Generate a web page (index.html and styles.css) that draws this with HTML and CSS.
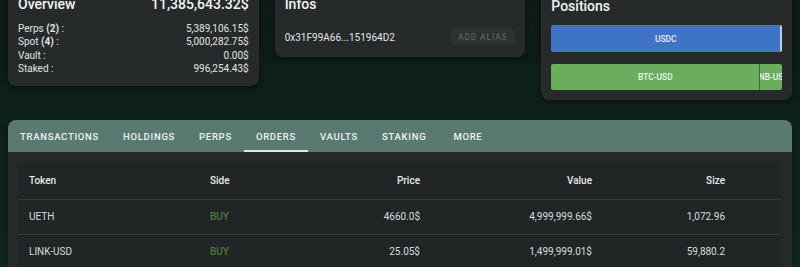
FILE: index.html
```html
<!DOCTYPE html>
<html lang="en">
<head>
<meta charset="utf-8">
<title>Account</title>
<link rel="stylesheet" href="styles.css">
</head>
<body>
<div class="page">
  <div class="cards">
    <section class="card overview">
      <div class="card-head">
        <h2 class="card-title">Overview</h2>
        <span class="total">11,385,643.32$</span>
      </div>
      <div class="stats">
        <div class="stat"><span>Perps <b>(2)</b> :</span><span>5,389,106.15$</span></div>
        <div class="stat"><span>Spot <b>(4)</b> :</span><span>5,000,282.75$</span></div>
        <div class="stat"><span>Vault :</span><span>0.00$</span></div>
        <div class="stat"><span>Staked :</span><span>996,254.43$</span></div>
      </div>
    </section>
    <section class="card infos">
      <h2 class="card-title">Infos</h2>
      <div class="addr-row">
        <span class="addr">0x31F99A66...151964D2</span>
        <button class="alias-btn" type="button">ADD ALIAS</button>
      </div>
    </section>
    <section class="card positions">
      <h2 class="card-title">Positions</h2>
      <div class="bar">
        <div class="seg seg-usdc" style="width:99.2%">USDC</div>
        <div class="seg seg-light" style="width:0.8%"></div>
      </div>
      <div class="bar">
        <div class="seg seg-green" style="width:90.2%">BTC-USD</div>
        <div class="seg seg-green seg-split" style="width:9.8%">BNB-USD</div>
      </div>
    </section>
  </div>

  <section class="panel">
    <nav class="tabs">
      <span class="tab">TRANSACTIONS</span>
      <span class="tab">HOLDINGS</span>
      <span class="tab">PERPS</span>
      <span class="tab active">ORDERS</span>
      <span class="tab">VAULTS</span>
      <span class="tab">STAKING</span>
      <span class="tab tab-more">MORE</span>
    </nav>
    <div class="panel-body">
      <div class="table-card">
        <table class="orders">
          <colgroup>
            <col class="c-token">
            <col class="c-side">
            <col class="c-price">
            <col class="c-value">
            <col class="c-size">
            <col class="c-rest">
          </colgroup>
          <thead>
            <tr>
              <th class="l">Token</th>
              <th class="l">Side</th>
              <th class="r">Price</th>
              <th class="r">Value</th>
              <th class="r">Size</th>
              <th></th>
            </tr>
          </thead>
          <tbody>
            <tr>
              <td class="l">UETH</td>
              <td class="l buy">BUY</td>
              <td class="r">4660.0$</td>
              <td class="r">4,999,999.66$</td>
              <td class="r">1,072.96</td>
              <td></td>
            </tr>
            <tr>
              <td class="l">LINK-USD</td>
              <td class="l buy">BUY</td>
              <td class="r">25.05$</td>
              <td class="r">1,499,999.01$</td>
              <td class="r">59,880.2</td>
              <td></td>
            </tr>
          </tbody>
        </table>
      </div>
    </div>
  </section>
</div>
</body>
</html>
```

FILE: styles.css
```css
* { box-sizing: border-box; }

html, body {
  height: 100%;
}

body {
  margin: 0;
  padding: 0 8px;
  background: linear-gradient(180deg, #0d1b18 0%, #0f221d 60%, #10271f 100%);
  font-family: Roboto, "Noto Sans", "Liberation Sans", sans-serif;
  color: #e4e7e6;
  overflow: hidden;
}

.page {
  margin-top: -14px;
}

.cards {
  display: grid;
  grid-template-columns: repeat(3, 1fr);
  column-gap: 16px;
  align-items: start;
}

.card {
  background: #272a2a;
  border-radius: 8px;
  padding: 10px;
  box-shadow: 0 2px 6px rgba(0, 0, 0, 0.45);
}

.card-title {
  margin: 0;
  font-size: 14px;
  line-height: 17px;
  font-weight: 500;
  color: #f2f3f3;
}

.card-head {
  display: flex;
  justify-content: space-between;
  align-items: baseline;
}

.total {
  font-size: 14px;
  line-height: 17px;
  font-weight: 500;
  color: #f2f3f3;
}

.stats {
  margin-top: 9px;
  font-size: 10px;
  line-height: 13.4px;
  color: #e2e5e4;
}

.stat {
  display: flex;
  justify-content: space-between;
}

.stat b {
  font-weight: 700;
}

.infos {
  padding-bottom: 12px;
}

.addr-row {
  margin-top: 16px;
  display: flex;
  justify-content: space-between;
  align-items: center;
  height: 16px;
}

.addr {
  font-size: 10px;
  color: #e2e5e4;
}

.alias-btn {
  font-family: inherit;
  font-size: 8.3px;
  font-weight: 500;
  letter-spacing: 0.9px;
  color: #5b605f;
  background: #2d3130;
  border: none;
  border-radius: 3px;
  height: 16px;
  width: 65px;
  padding: 0;
}

.positions .card-title {
  margin-top: 2px;
}

.bar {
  display: flex;
  height: 27px;
  margin-top: 10px;
  border-radius: 2px;
  overflow: hidden;
}

.bar + .bar {
  margin-top: 12px;
  height: 26px;
}

.seg {
  display: flex;
  align-items: center;
  justify-content: center;
  font-size: 8.4px;
  font-weight: 500;
  color: #e9eef5;
  white-space: nowrap;
  overflow: hidden;
}

.seg-usdc {
  background: #3f73c4;
}

.seg-light {
  background: #b9cde9;
}

.seg-green {
  background: #69ad5d;
  color: #eef5ec;
}

.seg-split {
  border-left: 1px solid #3d6a36;
}

.panel {
  margin-top: 20px;
  border-radius: 8px 8px 0 0;
  background: #262929;
  box-shadow: 0 2px 6px rgba(0, 0, 0, 0.45);
}

.tabs {
  display: flex;
  height: 32px;
  background: #587a70;
  border-radius: 8px 8px 0 0;
}

.tab {
  position: relative;
  display: flex;
  align-items: center;
  padding: 0 12px;
  font-size: 9.5px;
  font-weight: 500;
  letter-spacing: 0.72px;
  color: #eef2f0;
}

.tab-more {
  padding-left: 15px;
}

.tab.active::after {
  content: "";
  position: absolute;
  left: 0;
  right: 0;
  bottom: 0;
  height: 2px;
  background: #dde6e2;
}

.panel-body {
  padding: 11px 11px 0 10px;
}

.table-card {
  background: #222526;
  border-radius: 4px;
  height: 120px;
}

.orders {
  width: 100%;
  border-collapse: collapse;
  table-layout: fixed;
  font-size: 10px;
}

.c-token { width: 181px; }
.c-side { width: 116px; }
.c-price { width: 116px; }
.c-value { width: 172px; }
.c-size { width: 133px; }

.orders th,
.orders td {
  padding: 0 11px;
  white-space: nowrap;
}

.orders th {
  height: 36px;
  font-weight: 500;
  color: #e7eae9;
}

.orders td {
  height: 35px;
  border-top: 1px solid #343837;
  color: #d9dcdb;
}

.orders .l { text-align: left; }
.orders .r { text-align: right; }

.orders td.buy {
  color: #4b7c37;
  font-weight: 500;
}
```
